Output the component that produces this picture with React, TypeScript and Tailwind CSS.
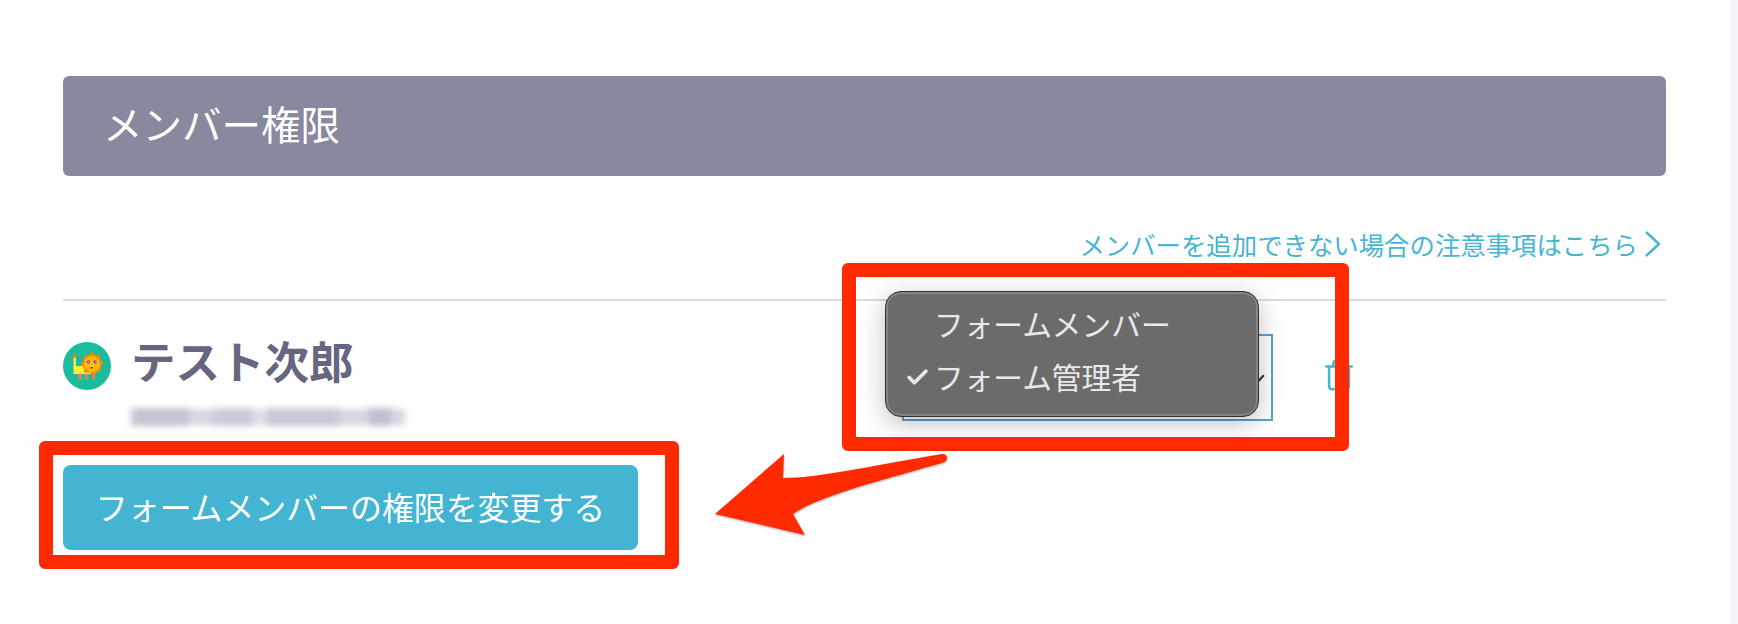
import { Check, Trash2 } from 'lucide-react';

function LionAvatar() {
  return (
    <svg viewBox="0 0 48 48" className="h-12 w-12 shrink-0">
      <circle cx="24" cy="24" r="24" fill="#1abc9c" />
      {/* tail */}
      <rect x="10.5" y="15" width="2.5" height="12" fill="#ffeb3b" />
      <circle cx="11.5" cy="14" r="2" fill="#f57c00" />
      {/* legs */}
      <rect x="15" y="31" width="4" height="7" fill="#b9935a" />
      <rect x="22" y="31" width="3.5" height="7" fill="#b9935a" />
      <rect x="29" y="31" width="3.5" height="7" fill="#b9935a" />
      {/* body */}
      <rect x="10.5" y="24" width="20" height="8" fill="#ffeb3b" />
      {/* mane */}
      <circle cx="29" cy="12.5" r="2.2" fill="#f57c00" />
      <circle cx="35" cy="15" r="2.2" fill="#f57c00" />
      <circle cx="38" cy="21" r="2.2" fill="#f57c00" />
      <circle cx="36" cy="27" r="2.2" fill="#f57c00" />
      <circle cx="30" cy="31" r="2.2" fill="#f57c00" />
      <circle cx="23" cy="28.5" r="2.2" fill="#f57c00" />
      <circle cx="20" cy="22" r="2.2" fill="#f57c00" />
      <circle cx="23" cy="15.5" r="2.2" fill="#f57c00" />
      <circle cx="29" cy="22" r="9.5" fill="#ff9800" />
      <circle cx="29" cy="22" r="7.5" fill="#ffc107" />
      {/* face */}
      <circle cx="25.5" cy="20" r="1.7" fill="#9c27b0" />
      <circle cx="32" cy="20" r="1.7" fill="#9c27b0" />
      <circle cx="25.5" cy="20" r="0.6" fill="#fff" />
      <circle cx="32" cy="20" r="0.6" fill="#fff" />
      <rect x="27.5" y="25" width="2.5" height="1.5" fill="#8e2a6a" />
    </svg>
  );
}

function BlurredEmail() {
  return (
    <div className="flex h-7 w-[277px] items-center blur-[3px]">
      <span className="h-[18px] w-[58px] bg-[#c4c4d2]" />
      <span className="h-4 w-[24px] bg-[#d6d6e0]" />
      <span className="h-[18px] w-[40px] bg-[#cbcbd8]" />
      <span className="h-4 w-[14px] bg-[#dedee6]" />
      <span className="h-[18px] w-[72px] bg-[#c8c8d6]" />
      <span className="h-4 w-[30px] bg-[#d6d6e0]" />
      <span className="h-[18px] w-[22px] bg-[#bfbfcf]" />
      <span className="h-4 w-[14px] bg-[#d6d6e0]" />
    </div>
  );
}

export default function App() {
  return (
    <div className="relative flex h-[624px] w-[1738px] overflow-hidden bg-white font-['Noto_Sans_CJK_JP',sans-serif]">
      <main className="flex-1 pl-[63px] pr-[64px] pt-[76px]">
        <div className="flex h-[100px] items-center rounded-[6px] bg-[#88889e] pb-[6px] pl-[40px] text-[39.5px] text-white">
          メンバー権限
        </div>

        <div className="flex items-center justify-end pb-[36px] pr-[4px] pt-[49px] text-[25.4px] leading-[38px] text-[#45b5d2]">
          メンバーを追加できない場合の注意事項はこちら
          <svg viewBox="0 0 18 26" className="ml-[6px] h-[26px] w-[18px]" fill="none" stroke="#45b5d2" strokeWidth="2.5">
            <polyline points="2,1 15,13 2,25" />
          </svg>
        </div>

        <div className="border-t-2 border-[#dddddd]" />

        <div className="flex pt-[33px]">
          <div className="mt-2 w-[839px]">
            <div className="flex h-12 items-center gap-5">
              <LionAvatar />
              <span className="-translate-y-[6px] text-[44.5px] font-bold leading-[48px] text-[#666680]">テスト次郎</span>
            </div>
            <div className="ml-[68px] mt-[13px]">
              <BlurredEmail />
            </div>
          </div>

          <div className="relative h-[87px] w-[371px] border-2 border-[#5b9fd4]">
            <div className="absolute right-[8px] top-[36px] h-[8px] w-[8px] rotate-45 border-b-2 border-r-2 border-[#333333]" />
            <div className="absolute left-[-19px] top-[-45px] h-[126px] w-[374px] rounded-[16px] border border-[#333333] bg-[#6b6b6b] pt-[6px] text-[29.7px] text-[#e8e8e8] shadow-[inset_0_0_0_2px_#858585,0_6px_24px_rgba(0,0,0,0.25)]">
              <div className="flex h-[53px] items-center pl-[48px]">フォームメンバー</div>
              <div className="flex h-[53px] items-center pl-[19px]">
                <Check size={25} strokeWidth={3.6} className="mr-[4px]" />
                フォーム管理者
              </div>
            </div>
          </div>

          <div className="ml-[49px] mt-6 text-[#45b5d2]">
            <Trash2 size={34} strokeWidth={1.8} />
          </div>
        </div>

        <button className="mt-[34px] flex h-[85px] w-[575px] items-center justify-center rounded-[8px] bg-[#43b4d1] pb-[2px] text-[31.9px] text-white">
          フォームメンバーの権限を変更する
        </button>
      </main>

      <div className="w-2 bg-[#f5f6fb]" />

      {/* annotations */}
      <div className="absolute left-[842px] top-[263px] h-[188px] w-[507px] rounded-[6px] border-[14px] border-[#ff2a00]" />
      <div className="absolute left-[39px] top-[441px] h-[128px] w-[640px] rounded-[6px] border-[14px] border-[#ff2a00]" />
      <svg viewBox="0 0 260 110" className="absolute left-[700px] top-[440px] h-[110px] w-[260px] drop-shadow-[0_1px_1px_rgba(0,0,0,0.35)]">
        <path
          d="M15 74 L84 14 L83 38 C120 38 180 24 242 14 Q247 14 247 18 Q247 22 242 23 C190 38 120 55 93 74 L105 95 Z"
          fill="#ff2a00"
        />
      </svg>
    </div>
  );
}
